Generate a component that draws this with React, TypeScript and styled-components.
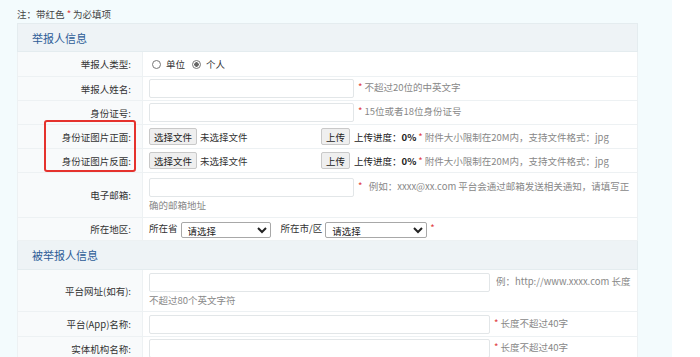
import styled, { createGlobalStyle } from "styled-components"

const GlobalStyle = createGlobalStyle`
    html, body {
        margin: 0;
        padding: 0;
        background: #ffffff;
    }
    body {
        font-family: "Noto Sans CJK SC", "Noto Sans", sans-serif;
        font-size: 9.5px;
        color: #333;
    }
`

const Page = styled.div`
    width: 672px;
    height: 357px;
    background: #f3fbfd;
    padding: 7px 0 0 17px;
    box-sizing: border-box;
    overflow: hidden;
`

const Note = styled.div`
    height: 16px;
    line-height: 14px;
    color: #444;
`

const Star = styled.span`
    color: #e03a3a;
    margin-right: 2px;
`

const Form = styled.table`
    width: 621px;
    border-collapse: collapse;
    border: 1px solid #e4ecef;
    background: #fff;
    table-layout: fixed;
`

const LabelCol = styled.col`
    width: 125px;
`

const SectionRow = styled.tr`
    background: #eef3f6;
`

const SectionCell = styled.td<{ $h: number }>`
    height: ${p => p.$h}px;
    padding: 0 0 0 14px;
    font-size: 11px;
    color: #2d5c97;
    border: 1px solid #e4ecef;
`

const Row = styled.tr<{ $h: number }>`
    height: ${p => p.$h}px;
`

const Label = styled.td`
    padding: 0 11px 0 0;
    text-align: right;
    background: #f8fafb;
    color: #333;
    border: 1px solid #edf1f3;
    white-space: nowrap;
`

const Field = styled.td`
    padding: 0 6px 0 6px;
    border: 1px solid #edf1f3;
    color: #333;
    line-height: 16px;
`

const TextInput = styled.input<{ $w: number }>`
    width: ${p => p.$w}px;
    height: 19px;
    box-sizing: border-box;
    border: 1px solid #e2e6e8;
    border-radius: 2px;
    vertical-align: middle;
    margin: 0;
`

const Hint = styled.span<{ $gap?: number }>`
    color: #888;
    margin-left: ${p => p.$gap ?? 4}px;
`

const Radio = styled.span<{ $checked?: boolean }>`
    display: inline-block;
    width: 7px;
    height: 7px;
    border: 1px solid #777;
    border-radius: 50%;
    vertical-align: -1px;
    margin: 0 5px 0 3px;
    box-sizing: content-box;
    background: ${p => p.$checked ? "radial-gradient(circle, #666 0 2px, #fff 2.5px)" : "#fff"};
`

const Choice = styled.span`
    margin-right: 4px;
`

const FileLine = styled.div`
    display: flex;
    align-items: center;
    white-space: nowrap;
`

const GrayButton = styled.span`
    display: inline-flex;
    align-items: center;
    justify-content: center;
    height: 15px;
    padding: 0 4px;
    background: #efefef;
    border: 1px solid #c9c9c9;
    border-radius: 2px;
    color: #222;
`

const FileName = styled.span`
    margin-left: 3px;
    width: 121px;
`

const Progress = styled.span`
    margin-left: 4px;
    color: #222;
    b {
        font-weight: 700;
    }
`

const Select = styled.select<{ $w: number }>`
    width: ${p => p.$w}px;
    height: 16px;
    font-size: 9.5px;
    font-family: "Noto Sans CJK SC", sans-serif;
    padding: 0 2px;
    border: 1px solid #a8a8a8;
    border-radius: 2px;
    background: #fff;
    color: #222;
    margin: 0 0 0 3px;
    vertical-align: middle;
`

const AreaLabel = styled.span<{ $gap?: number }>`
    margin-left: ${p => p.$gap ?? 0}px;
`

const Highlight = styled.div`
    position: absolute;
    left: 44px;
    top: 120px;
    width: 92px;
    height: 52px;
    border: 2px solid #e5322d;
    border-radius: 3px;
    box-sizing: border-box;
    pointer-events: none;
`

const Wrap = styled.div`
    position: relative;
`

const FileRow = ({ label }: { label: string }) => (
    <Row $h={24}>
        <Label>{label}:</Label>
        <Field>
            <FileLine>
                <GrayButton>选择文件</GrayButton>
                <FileName>未选择文件</FileName>
                <GrayButton>上传</GrayButton>
                <Progress>上传进度：<b>0%</b></Progress>
                <Hint $gap={2}><Star>*</Star>附件大小限制在20M内，支持文件格式：jpg</Hint>
            </FileLine>
        </Field>
    </Row>
)

export default function App() {
    return (
        <Wrap>
            <GlobalStyle />
            <Page>
                <Note>注：带红色 <Star>*</Star>为必填项</Note>
                <Form>
                    <colgroup>
                        <LabelCol />
                        <col />
                    </colgroup>
                    <tbody>
                        <SectionRow>
                            <SectionCell colSpan={2} $h={27}>举报人信息</SectionCell>
                        </SectionRow>
                        <Row $h={25}>
                            <Label>举报人类型:</Label>
                            <Field>
                                <Radio /><Choice>单位</Choice>
                                <Radio $checked /><Choice>个人</Choice>
                            </Field>
                        </Row>
                        <Row $h={24}>
                            <Label>举报人姓名:</Label>
                            <Field>
                                <TextInput $w={205} />
                                <Hint><Star>*</Star>不超过20位的中英文字</Hint>
                            </Field>
                        </Row>
                        <Row $h={24}>
                            <Label>身份证号:</Label>
                            <Field>
                                <TextInput $w={205} />
                                <Hint><Star>*</Star>15位或者18位身份证号</Hint>
                            </Field>
                        </Row>
                        <FileRow label="身份证图片正面" />
                        <FileRow label="身份证图片反面" />
                        <Row $h={45}>
                            <Label>电子邮箱:</Label>
                            <Field>
                                <TextInput $w={205} />
                                <Hint><Star>*</Star> &nbsp;例如：xxxx@xx.com 平台会通过邮箱发送相关通知，请填写正确的邮箱地址</Hint>
                            </Field>
                        </Row>
                        <Row $h={23}>
                            <Label>所在地区:</Label>
                            <Field>
                                <AreaLabel>所在省</AreaLabel>
                                <Select $w={90}><option>请选择</option></Select>
                                <AreaLabel $gap={10}>所在市/区</AreaLabel>
                                <Select $w={102}><option>请选择</option></Select>
                                <Hint $gap={3}><Star>*</Star></Hint>
                            </Field>
                        </Row>
                        <SectionRow>
                            <SectionCell colSpan={2} $h={28}>被举报人信息</SectionCell>
                        </SectionRow>
                        <Row $h={42}>
                            <Label>平台网址(如有):</Label>
                            <Field>
                                <TextInput $w={341} />
                                <Hint $gap={6}>例：http://www.xxxx.com 长度不超过80个英文字符</Hint>
                            </Field>
                        </Row>
                        <Row $h={25}>
                            <Label>平台(App)名称:</Label>
                            <Field>
                                <TextInput $w={341} />
                                <Hint><Star>*</Star>长度不超过40字</Hint>
                            </Field>
                        </Row>
                        <Row $h={24}>
                            <Label>实体机构名称:</Label>
                            <Field>
                                <TextInput $w={341} />
                                <Hint><Star>*</Star>长度不超过40字</Hint>
                            </Field>
                        </Row>
                    </tbody>
                </Form>
            </Page>
            <Highlight />
        </Wrap>
    )
}
